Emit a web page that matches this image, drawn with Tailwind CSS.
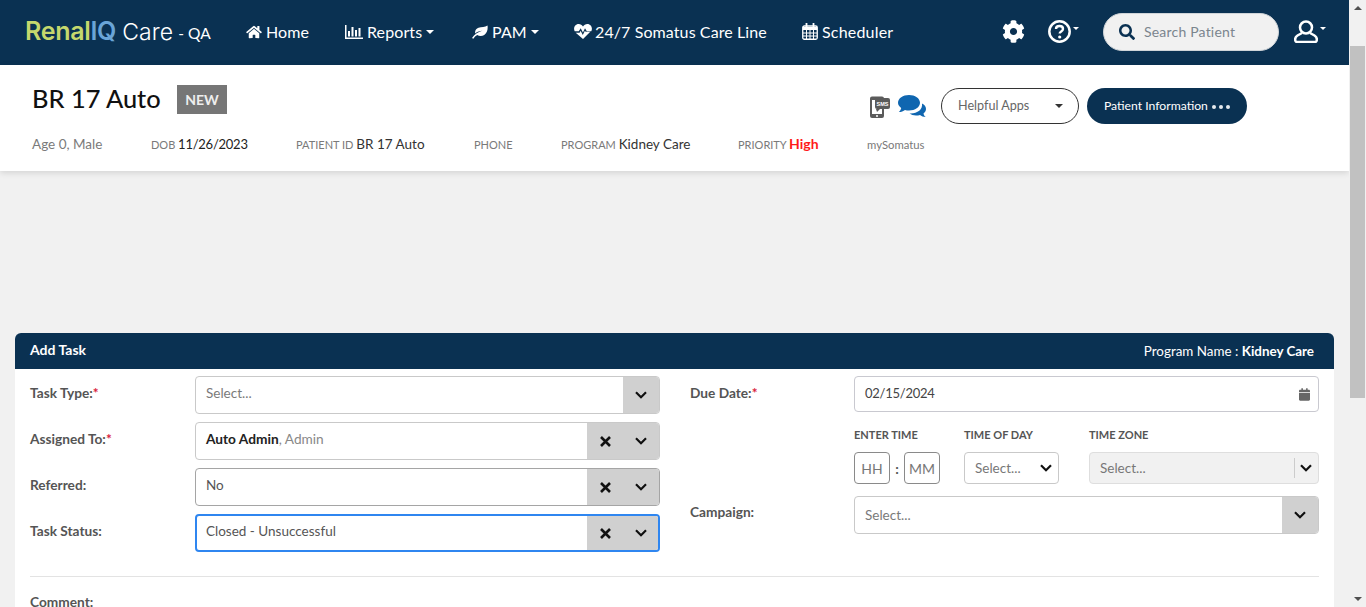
<!DOCTYPE html>
<html lang="en">
<head>
  <meta charset="UTF-8">
  <title>RenalIQ Care - Add Task</title>
  <script src="https://cdn.jsdelivr.net/npm/@tailwindcss/browser@4"></script>
</head>
<body class="h-[607px] overflow-hidden flex bg-[#f1f1f1] font-['Lato','Noto_Sans',sans-serif]">
  <div class="w-[1349px] shrink-0 h-[607px] overflow-hidden">

    <!-- top nav -->
    <nav class="h-[65px] bg-[#0a3152] flex items-center text-white text-[16px] tracking-[0.1px] pb-[2px]">
      <div class="ml-[25px] w-[221px] flex items-baseline whitespace-nowrap">
        <span class="text-[25px] font-semibold text-[#c5d86d] font-['Inter',sans-serif] tracking-[-0.3px]">Renal<span class="text-[#6aa5d8]">IQ</span></span>
        <span class="text-[23px] font-light ml-[6px] font-['Inter',sans-serif]">Care</span>
        <span class="text-[15.500px] ml-[5px] relative -top-[1px]">- QA</span>
      </div>
      <a class="flex items-center gap-[4px] w-[98px]">
        <svg class="w-[16px] h-[14px]" viewBox="0 0 576 512" fill="currentColor"><path d="M280.37 148.26L96 300.11V464a16 16 0 0 0 16 16l112.06-.29a16 16 0 0 0 15.92-16V368a16 16 0 0 1 16-16h64a16 16 0 0 1 16 16v95.64a16 16 0 0 0 16 16.05L464 480a16 16 0 0 0 16-16V300L295.67 148.26a12.19 12.19 0 0 0-15.3 0zM571.6 251.47L488 182.56V44.05a12 12 0 0 0-12-12h-56a12 12 0 0 0-12 12v72.61L318.47 43a48 48 0 0 0-61 0L4.34 251.47a12 12 0 0 0-1.6 16.9l25.5 31A12 12 0 0 0 45.15 301l235.22-193.74a12.19 12.19 0 0 1 15.3 0L530.9 301a12 12 0 0 0 16.9-1.6l25.5-31a12 12 0 0 0-1.7-16.93z"/></svg>
        Home
      </a>
      <a class="flex items-center w-[128px]">
        <svg class="w-[18px] h-[14px] ml-[1px] mr-[4px]" viewBox="0 0 18 14" fill="currentColor"><path d="M0 0h1.500v12.500H18V14H0z"/><path d="M3 6h2v5.500H3zM6.500 2h2v9.500h-2zM10 5h2v6.500h-2zM13.500 3h2v8.500h-2z"/></svg>
        Reports
        <span class="ml-[4px] w-0 h-0 border-x-[4px] border-x-transparent border-t-[4px] border-t-white"></span>
      </a>
      <a class="flex items-center gap-[4px] w-[102px]">
        <svg class="w-[16px] h-[14px]" viewBox="0 0 16 14" fill="currentColor"><path d="M15.500 0.500c.6 3.500-.3 7.500-3.300 9.500-2.300 1.500-5 1.300-7 .1C3.700 11 2.300 12.300 1.300 13.700L0 13c1.200-1.800 2.700-3.300 4.300-4.400 1.800-1.300 3.800-2.200 6.200-2.800-2.700 0-5.500 1-7.300 2.600C2.700 5.800 4 3.700 6.500 2.800c3-1 6.500-.3 9-2.300z"/></svg>
        PAM
        <span class="w-0 h-0 border-x-[4px] border-x-transparent border-t-[4px] border-t-white"></span>
      </a>
      <a class="flex items-center gap-[3px] w-[228px]">
        <svg class="w-[18px] h-[15px]" viewBox="0 0 18 15" fill="currentColor"><path d="M9 15 1.700 8.700h3.900l1-2 2.200 4.300 2.100-4.300.7 1.100h4.700zM.7 7.300C-.9 4.300.7 0 4.700 0 6.500 0 8 1 9 2.400 10 1 11.500 0 13.300 0c4 0 5.600 4.300 4 7.300h-4.500L11 4.300 8.900 8.500 6.700 4.200 4.800 7.300z"/></svg>
        <span class="tracking-[0.1px]">24/7 Somatus Care Line</span>
      </a>
      <a class="flex items-center gap-[4px]">
        <svg class="w-[16px] h-[17px]" viewBox="0 0 16 17" fill="none" stroke="currentColor"><rect x=".75" y="3" width="14.500" height="13.250" rx="1.500" stroke-width="1.300"/><path d="M1 5.500h14" stroke-width="3"/><path d="M4.500 0v4M11.500 0v4" stroke-width="1.800"/><path d="M4.500 7v9M8 7v9M11.500 7v9M1 10h14M1 13h14" stroke-width="1"/></svg>
        <span class="tracking-[0.2px]">Scheduler</span>
      </a>
      <div class="ml-auto flex items-center">
        <svg class="w-[23px] h-[23px]" viewBox="0 0 512 512" fill="currentColor"><path d="M487.4 315.7l-42.6-24.6c4.3-23.2 4.3-47 0-70.2l42.6-24.6c4.9-2.8 7.1-8.6 5.500-14-11.100-35.600-30-67.800-54.700-94.600-3.800-4.100-10-5.100-14.800-2.300L380.800 110c-17.900-15.400-38.500-27.300-60.800-35.100V25.800c0-5.600-3.900-10.500-9.400-11.700-36.700-8.200-74.300-7.800-109.200 0-5.500 1.200-9.400 6.100-9.400 11.700V75c-22.200 7.900-42.800 19.800-60.800 35.100L88.700 85.500c-4.900-2.800-11-1.900-14.800 2.300-24.700 26.700-43.600 58.900-54.700 94.600-1.700 5.400.6 11.200 5.500 14L67.300 221c-4.300 23.200-4.300 47 0 70.200l-42.600 24.600c-4.900 2.800-7.100 8.600-5.500 14 11.100 35.600 30 67.800 54.700 94.600 3.800 4.100 10 5.100 14.800 2.300l42.600-24.600c17.900 15.400 38.500 27.300 60.800 35.100v49.200c0 5.600 3.900 10.500 9.400 11.700 36.700 8.200 74.300 7.800 109.200 0 5.500-1.200 9.400-6.100 9.400-11.700v-49.200c22.200-7.900 42.800-19.800 60.800-35.100l42.600 24.600c4.900 2.800 11 1.900 14.800-2.300 24.700-26.700 43.600-58.900 54.700-94.600 1.500-5.500-.7-11.300-5.600-14.100zM256 336c-44.100 0-80-35.900-80-80s35.900-80 80-80 80 35.900 80 80-35.900 80-80 80z"/></svg>
        <svg class="w-[23px] h-[23px] ml-[23px]" viewBox="0 0 23 23" fill="none" stroke="currentColor"><circle cx="11.500" cy="11.500" r="10.200" stroke-width="2.500"/><path d="M8 9c0-2 1.500-3 3.500-3s3.500 1.200 3.500 3c0 2.500-3.300 2.500-3.300 4.500" stroke-width="2.400"/><circle cx="11.700" cy="17" r="1.600" fill="currentColor" stroke="none"/></svg>
        <span class="ml-[2px] mb-[6px] w-0 h-0 border-x-[3px] border-x-transparent border-t-[3px] border-t-white"></span>
        <div class="ml-[24px] w-[176px] h-[38px] bg-[#f1f1f1] rounded-full flex items-center border border-[#cfd4d8]">
          <svg class="ml-[15px] w-[16px] h-[16px] text-[#0a3152]" viewBox="0 0 512 512" fill="currentColor"><path d="M505 442.700L405.300 343c-4.500-4.500-10.600-7-17-7H372c27.600-35.300 44-79.700 44-128C416 93.100 322.900 0 208 0S0 93.100 0 208s93.100 208 208 208c48.300 0 92.700-16.400 128-44v16.300c0 6.400 2.500 12.500 7 17l99.700 99.700c9.400 9.400 24.600 9.400 33.900 0l28.300-28.300c9.400-9.400 9.400-24.600.1-34zM208 336c-70.700 0-128-57.200-128-128 0-70.700 57.200-128 128-128 70.700 0 128 57.200 128 128 0 70.700-57.200 128-128 128z"/></svg>
          <span class="ml-[9px] text-[14px] text-[#7b858e] tracking-[0.2px]">Search Patient</span>
        </div>
        <svg class="ml-[15px] w-[24px] h-[23px]" viewBox="0 0 24 23" fill="none" stroke="currentColor" stroke-width="2.500"><circle cx="12" cy="7.500" r="6"/><path d="M8 13 3.500 15.500C1.500 16.700 1 18 1.200 20c.1 1.300.8 2 2 2h17.600c1.200 0 1.900-.7 2-2 .2-2-.3-3.300-2.300-4.500L16 13"/></svg>
        <span class="ml-[2px] mr-[23px] mb-[6px] w-0 h-0 border-x-[3px] border-x-transparent border-t-[3px] border-t-white"></span>
      </div>
    </nav>

    <!-- patient header -->
    <section class="h-[106px] bg-white shadow-[0_2px_6px_rgba(0,0,0,0.12)] pl-[32px]">
      <div class="flex items-start pt-[20px] h-[70px]">
        <h1 class="text-[25.4px] leading-[27px] font-medium text-[#111] w-[145px]">BR 17 Auto</h1>
        <span class="w-[50px] h-[29px] bg-[#767676] text-[#eee] text-[14px] font-bold flex items-center justify-center">NEW</span>
        <div class="ml-auto flex items-center mt-[3px] mr-[102px]">
          <svg class="w-[20px] h-[22px] mt-[2px]" viewBox="0 0 20 22"><path d="M0 2.500A2 2 0 0 1 2 .500h10a2 2 0 0 1 2 2V20a2 2 0 0 1-2 2H2a2 2 0 0 1-2-2z" fill="#5b5b5b"/><rect x="2" y="4" width="10" height="14" fill="#fff"/><rect x="5" y="2" width="15" height="11" rx="2" fill="#5b5b5b"/><path d="M6 13h4l-3 3z" fill="#5b5b5b"/><text x="12.500" y="9.500" font-size="5.500" font-weight="700" fill="#fff" text-anchor="middle" font-family="Liberation Sans">SMS</text><circle cx="7" cy="20" r="1" fill="#fff"/></svg>
          <svg class="w-[28px] h-[22px] ml-[8px]" viewBox="0 0 28 22" fill="#0f66b0"><path d="M11 0c6 0 11 3.300 11 7.800s-5 7.700-11 7.700c-1.500 0-2.800-.2-4-.6C5.500 16 3.300 17 .8 17c1.200-1 2.200-2.500 2.400-4C1.200 11.700 0 9.800 0 7.800 0 3.300 5 0 11 0z"/><path d="M24 8.500c2.500 1.300 4 3.200 4 5.400 0 1.800-1 3.400-2.500 4.500.2 1.300 1 2.600 2.200 3.500-2.300 0-4.300-.8-5.700-2-1.200.4-2.600.6-4 .6-2.500 0-4.800-.7-6.500-2 7.500.5 13.500-4 12.500-10z"/></svg>
          <button class="ml-[15px] w-[138px] h-[36px] border border-[#333] rounded-full flex items-center pl-[16px] text-[12.600px] text-[#666] bg-white">Helpful Apps<span class="ml-auto mr-[15px] w-0 h-0 border-x-[4px] border-x-transparent border-t-[4px] border-t-[#333]"></span></button>
          <button class="ml-[8px] w-[160px] h-[36px] rounded-full bg-[#0a3152] text-white text-[12.200px] pt-[1px] pl-[17px] flex items-center gap-[4px]">Patient Information <span class="flex gap-[3px]"><i class="w-[4px] h-[4px] rounded-full bg-white/90"></i><i class="w-[4px] h-[4px] rounded-full bg-white/90"></i><i class="w-[4px] h-[4px] rounded-full bg-white/90"></i></span></button>
        </div>
      </div>
      <div class="flex items-baseline text-[13.500px] text-[#7a7a7a] -mt-[2px]">
        <span class="w-[119px]">Age 0, Male</span>
        <span class="w-[145px] text-[11px]">DOB <span class="text-[13px] text-[#222] tracking-[-0.25px]">11/26/2023</span></span>
        <span class="w-[178px] text-[11px]">PATIENT ID <span class="text-[13.500px] text-[#333]">BR 17 Auto</span></span>
        <span class="w-[87px] text-[11px]">PHONE</span>
        <span class="w-[177px] text-[11px]">PROGRAM <span class="text-[13.500px] text-[#333]">Kidney Care</span></span>
        <span class="w-[129px] text-[11px]">PRIORITY <span class="text-[14px] font-bold text-[#ff1a1a]">High</span></span>
        <span class="text-[11.300px]">mySomatus</span>
      </div>
    </section>

    <!-- add task card -->
    <section class="mt-[162px] mx-[15px] w-[1319px] bg-white rounded-t-[6px]">
      <header class="h-[36px] bg-[#0a3152] rounded-t-[6px] flex items-center justify-between pl-[15px] pr-[20px] text-white text-[13.400px]">
        <span class="font-bold text-[14px] leading-[14px] pb-[2px]">Add Task</span>
        <span>Program Name : <b>Kidney Care</b></span>
      </header>
      <div class="px-[15px] pt-[7px]">
        <div class="flex h-[201px] border-b border-[#e3e3e3]">
          <!-- left column -->
          <div class="w-[660px] text-[13.500px] text-[#555] flex flex-col gap-[8px]">
            <div class="flex h-[38px]">
              <label class="w-[165px] text-[13.700px] font-bold pt-[7px]">Task Type:<span class="text-[#d9213b]">*</span></label>
              <div class="w-[465px] flex border border-[#c9c9c9] rounded-[4px] overflow-hidden">
                <span class="flex-1 pl-[10px] pt-[6px] text-[#7a7a7a]">Select...</span>
                <span class="w-[36px] bg-[#d0d0d0] flex items-center justify-center"><svg class="w-[12px] h-[8px]" viewBox="0 0 12 8" fill="none" stroke="#111" stroke-width="2.200"><path d="M1 1.200 6 6.200l5-5"/></svg></span>
              </div>
            </div>
            <div class="flex h-[38px]">
              <label class="w-[165px] text-[13.700px] font-bold pt-[7px]">Assigned To:<span class="text-[#d9213b]">*</span></label>
              <div class="w-[465px] flex border border-[#c9c9c9] rounded-[4px] overflow-hidden">
                <span class="flex-1 pl-[10px] pt-[6px] text-[13.700px] text-[#888]"><b class="text-[#222]">Auto Admin</b>, Admin</span>
                <span class="w-[72px] bg-[#d0d0d0] flex items-center pl-[13px] gap-[24px]"><svg class="w-[11px] h-[11px]" viewBox="0 0 11 11" stroke="#111" stroke-width="2.600"><path d="M1 1l9 9M10 1l-9 9"/></svg><svg class="w-[12px] h-[8px]" viewBox="0 0 12 8" fill="none" stroke="#111" stroke-width="2.200"><path d="M1 1.200 6 6.200l5-5"/></svg></span>
              </div>
            </div>
            <div class="flex h-[38px]">
              <label class="w-[165px] text-[13.700px] font-bold pt-[7px]">Referred:</label>
              <div class="w-[465px] flex border border-[#a5a5a5] rounded-[4px] overflow-hidden">
                <span class="flex-1 pl-[10px] pt-[6px] text-[#555]">No</span>
                <span class="w-[72px] bg-[#d0d0d0] flex items-center pl-[13px] gap-[24px]"><svg class="w-[11px] h-[11px]" viewBox="0 0 11 11" stroke="#111" stroke-width="2.600"><path d="M1 1l9 9M10 1l-9 9"/></svg><svg class="w-[12px] h-[8px]" viewBox="0 0 12 8" fill="none" stroke="#111" stroke-width="2.200"><path d="M1 1.200 6 6.200l5-5"/></svg></span>
              </div>
            </div>
            <div class="flex h-[38px]">
              <label class="w-[165px] text-[13.700px] font-bold pt-[7px]">Task Status:</label>
              <div class="w-[465px] flex border-2 border-[#2f86f0] rounded-[4px] overflow-hidden">
                <span class="flex-1 pl-[9px] pt-[5px] text-[13.500px] text-[#555]">Closed - Unsuccessful</span>
                <span class="w-[71px] bg-[#d0d0d0] flex items-center pl-[13px] gap-[24px]"><svg class="w-[11px] h-[11px]" viewBox="0 0 11 11" stroke="#111" stroke-width="2.600"><path d="M1 1l9 9M10 1l-9 9"/></svg><svg class="w-[12px] h-[8px]" viewBox="0 0 12 8" fill="none" stroke="#111" stroke-width="2.200"><path d="M1 1.200 6 6.200l5-5"/></svg></span>
              </div>
            </div>
          </div>
          <!-- right column -->
          <div class="w-[629px] text-[13.500px] text-[#555]">
            <div class="flex h-[36px]">
              <label class="w-[164px] text-[13.700px] font-bold pt-[7px]">Due Date:<span class="text-[#d9213b]">*</span></label>
              <div class="w-[465px] border border-[#c9c9d0] rounded-[4px] flex items-center justify-between pl-[10px] pr-[8px] text-[13px] tracking-[-0.25px] text-[#444]">
                02/15/2024
                <svg class="w-[11px] h-[13px]" viewBox="0 0 448 512" fill="#666"><path d="M0 464c0 26.500 21.500 48 48 48h352c26.500 0 48-21.500 48-48V192H0v272zM400 64h-48V16c0-8.800-7.200-16-16-16h-32c-8.800 0-16 7.200-16 16v48H160V16c0-8.800-7.200-16-16-16h-32c-8.800 0-16 7.200-16 16v48H48C21.500 64 0 85.500 0 112v48h448v-48c0-26.500-21.500-48-48-48z"/></svg>
              </div>
            </div>
            <div class="ml-[164px] w-[465px] flex mt-[15px] text-[11px] font-bold text-[#555]">
              <div class="w-[110px]">
                <p class="h-[25px]">ENTER TIME</p>
                <div class="flex items-center text-[14px] text-[#777] font-normal">
                  <span class="w-[36px] h-[32px] border border-[#8a8a8a] rounded-[4px] flex items-center justify-center">HH</span>
                  <span class="w-[14px] text-center text-[#555] font-bold">:</span>
                  <span class="w-[36px] h-[32px] border border-[#8a8a8a] rounded-[4px] flex items-center justify-center">MM</span>
                </div>
              </div>
              <div class="w-[125px]">
                <p class="h-[25px]">TIME OF DAY</p>
                <div class="w-[95px] h-[32px] border border-[#c9c9c9] rounded-[4px] flex items-center pl-[10px] pr-[6px] justify-between text-[13.500px] text-[#777] font-normal">Select...<svg class="w-[12px] h-[8px]" viewBox="0 0 12 8" fill="none" stroke="#111" stroke-width="2.200"><path d="M1 1.200 6 6.200l5-5"/></svg></div>
              </div>
              <div class="flex-1">
                <p class="h-[25px]">TIME ZONE</p>
                <div class="h-[32px] bg-[#f1f1f1] border border-[#dedede] rounded-[4px] flex items-center pl-[10px] pr-[6px] justify-between text-[13.500px] text-[#777] font-normal">Select...<span class="flex items-center h-[20px] border-l border-[#ccc] pl-[5px]"><svg class="w-[12px] h-[8px]" viewBox="0 0 12 8" fill="none" stroke="#111" stroke-width="2.200"><path d="M1 1.200 6 6.200l5-5"/></svg></span></div>
              </div>
            </div>
            <div class="flex h-[38px] mt-[12px]">
              <label class="w-[164px] text-[13.700px] font-bold pt-[6px]">Campaign:</label>
              <div class="w-[465px] flex border border-[#c9c9c9] rounded-[4px] overflow-hidden">
                <span class="flex-1 pl-[10px] pt-[8px] text-[#7a7a7a]">Select...</span>
                <span class="w-[36px] bg-[#d0d0d0] flex items-center justify-center"><svg class="w-[12px] h-[8px]" viewBox="0 0 12 8" fill="none" stroke="#111" stroke-width="2.200"><path d="M1 1.200 6 6.200l5-5"/></svg></span>
              </div>
            </div>
          </div>
        </div>
        <p class="mt-[15px] text-[13.700px] font-bold text-[#555]">Comment:</p>
      </div>
    </section>
  </div>

  <!-- page scrollbar -->
  <div class="w-[17px] h-[607px] bg-[#f1f1f1] flex flex-col items-center">
    <span class="mt-[6px] w-0 h-0 border-x-[4px] border-x-transparent border-b-[4px] border-b-[#505050]"></span>
    <div class="mt-[36px] w-[15px] h-[352px] bg-[#c1c1c1]"></div>
    <span class="mt-auto mb-[6px] w-0 h-0 border-x-[4px] border-x-transparent border-t-[4px] border-t-[#505050]"></span>
  </div>
</body>
</html>
